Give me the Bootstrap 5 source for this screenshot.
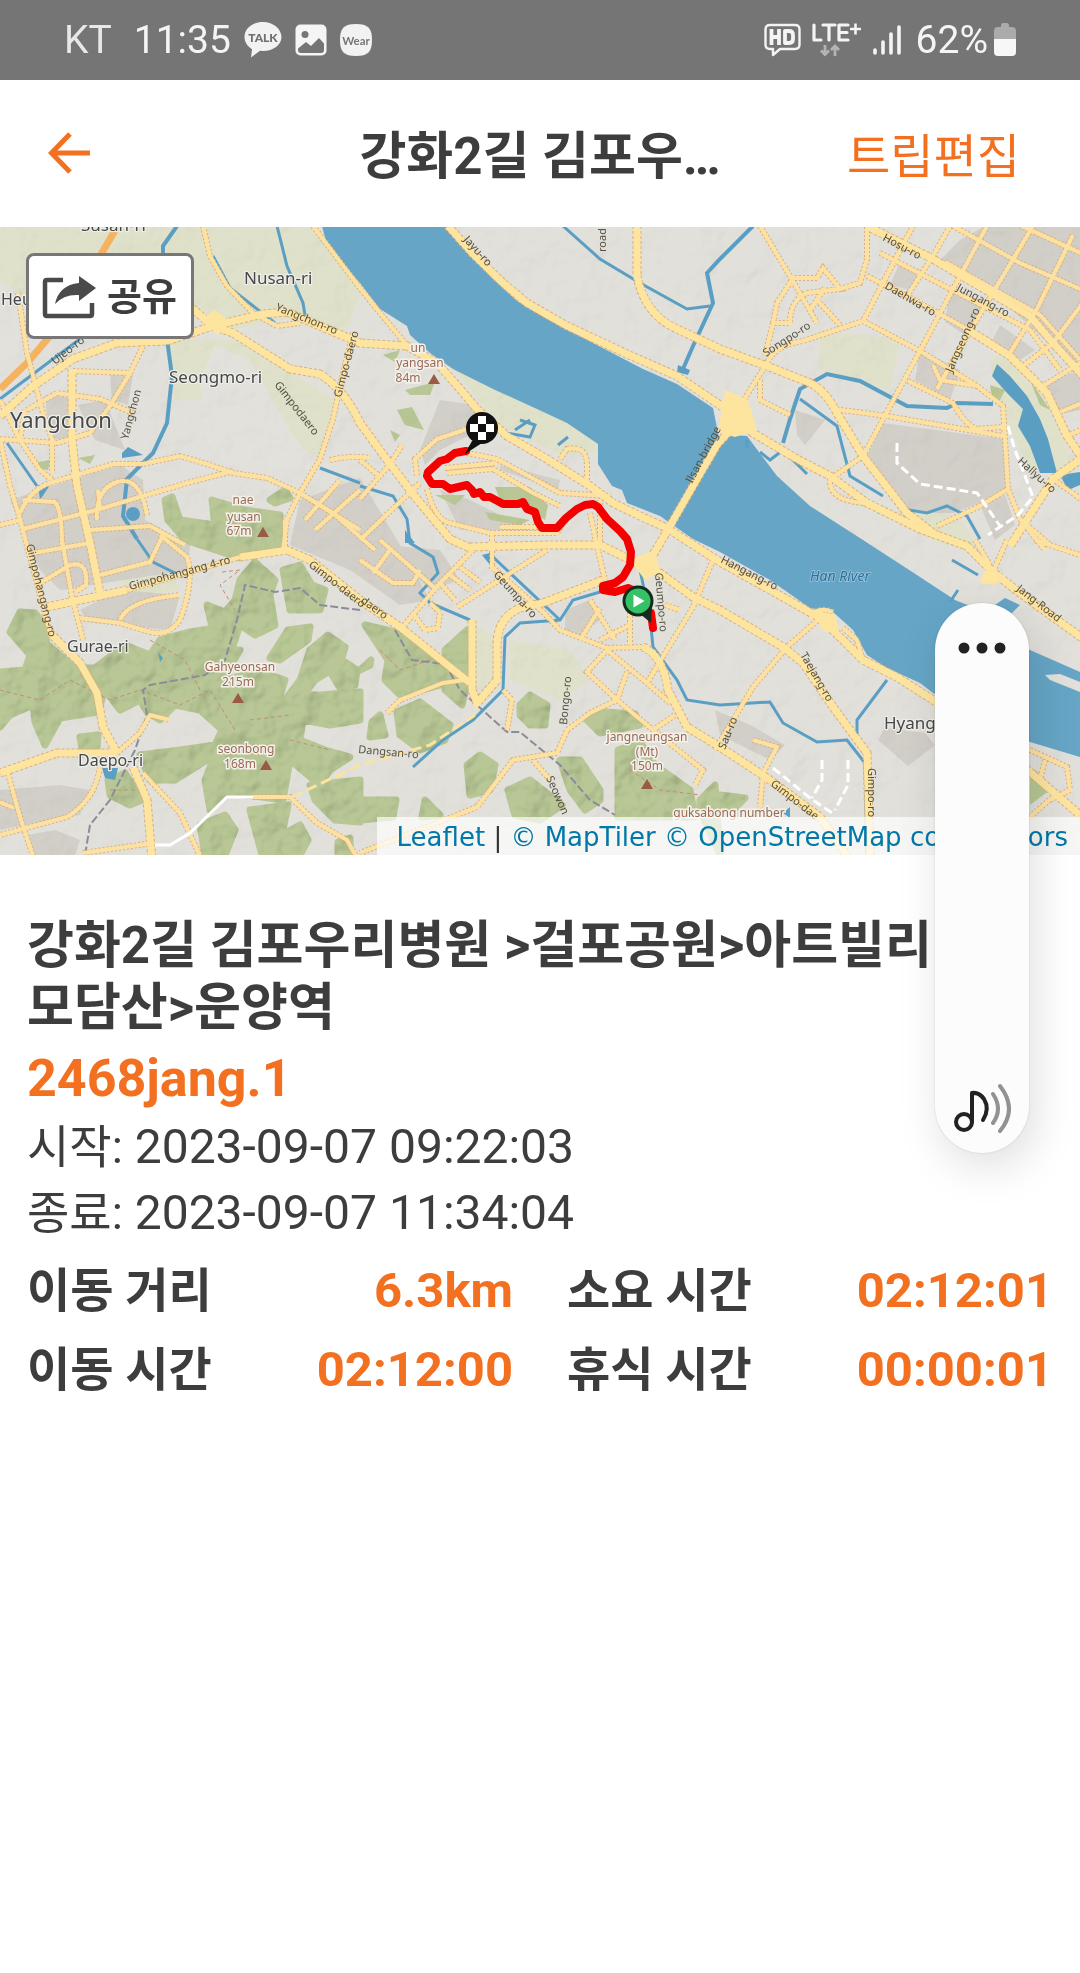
<!DOCTYPE html>
<html lang="ko">
<head>
<meta charset="utf-8">
<meta name="viewport" content="width=device-width, initial-scale=1">
<title>강화2길 김포우리병원</title>
<link href="https://cdn.jsdelivr.net/npm/bootstrap@5.3.0/dist/css/bootstrap.min.css" rel="stylesheet">
<style>
  :root { --trip-orange: #f37021; --trip-ink: #3d3d3d; }
  body { font-family: Roboto, "Noto Sans CJK KR", sans-serif; color: var(--trip-ink); background: #fff; min-height: 100vh; }
  .status-strip { background: #757575; height: 80px; padding: 0 64px; color: #f4f4f4; font-size: 39px; line-height: 46px; }
  .status-strip svg { display: block; flex: none; }
  .carrier { color: #e8e8e8; margin-right: 22px; }
  .strip-left { gap: 13px; }
  .strip-right { gap: 11px; }
  .battery-group { gap: 6px; }
  .top-nav { height: 147px; padding: 6px 48px 0; }
  .top-nav h1 { font-size: 51px; line-height: 62px; font-weight: 700; }
  .nav-side { flex: 1 0 0; }
  .edit-link { color: var(--trip-orange); font-size: 47px; line-height: 62px; margin-right: 12px; }
  .map-box svg.map-art { display: block; width: 100%; height: auto; }
  .share-btn { top: 26px; left: 26px; height: 86px; padding: 2px 14px 0 13px; gap: 11px; background: #fff; border: 3px solid #777; border-radius: 8px; font-size: 38px; line-height: 48px; font-weight: 700; color: var(--trip-ink); }
  .attrib { right: 0; bottom: 0; padding: 2px 12px 0 20px; height: 38px; line-height: 36px; background: rgba(255,255,255,.7); font-family: "DejaVu Sans", sans-serif; font-size: 26px; color: #333; }
  .attrib a { color: #0078a8; text-decoration: none; }
  .details { padding: 60px 27px 0; }
  .details h2 { font-size: 51px; line-height: 62px; font-weight: 700; }
  .user-link { display: block; color: var(--trip-orange); font-size: 52px; line-height: 71px; padding-top: 4px; font-weight: 700; text-decoration: none; }
  .when { font-size: 48px; line-height: 65px; }
  .when-label { font-size: 46px; }
  .stats { margin-top: 5px; column-gap: 54px; display: grid; grid-template-columns: 1fr 1fr; font-size: 49px; line-height: 79px; font-weight: 700; }
  .stats dt { font-weight: 700; font-size: 47px; }
  .stats dd { color: var(--trip-orange); }
  .volume-panel { right: 51px; top: 376px; width: 94px; height: 550px; border-radius: 47px; background: #fcfcfc; box-shadow: 0 0 2px rgba(0,0,0,.15), 6px 14px 44px rgba(0,0,0,.13); padding: 26px 0 17px; z-index: 3; }
  .panel-btn { border: 0; background: none; padding: 0; }
  .panel-btn svg { display: block; }
</style>
</head>
<body>
<div class="status-strip d-flex align-items-center justify-content-between">
  <div class="strip-left d-flex align-items-center">
    <span><span class="carrier">KT</span>11:35</span>
    <svg width="38" height="38" viewBox="0 0 38 38" aria-label="Talk"><path fill="#f2f2f2" d="M19 1C8.500 1 .5 7.500.5 16c0 5 3 9.500 7.500 12.200L7 36.500l9-6.700 3 .2c10.500 0 18.500-6.300 18.500-14S29.500 1 19 1z"/><text x="19" y="20.500" text-anchor="middle" font-family="Lato, sans-serif" font-weight="900" font-size="12" fill="#6f6f6f">TALK</text></svg>
    <svg width="32" height="32" viewBox="0 0 32 32" aria-label="Gallery"><rect x=".5" y=".5" width="31" height="31" rx="5" fill="#f5f5f5"/><circle cx="10" cy="10.500" r="3.500" fill="#757575"/><path fill="#757575" d="M3 24.500 11 18l5 4 8-8 5 5.500V26q0 3-3 3H6q-3 0-3-3z"/></svg>
    <svg width="32" height="32" viewBox="0 0 32 32" aria-label="Wear"><path fill="#f2f2f2" d="M16 0c12 0 16 4 16 16s-4 16-16 16S0 28 0 16 4 0 16 0z"/><text x="16" y="20.500" text-anchor="middle" font-family="Lato, sans-serif" font-weight="700" font-size="11.500" fill="#777">Wear</text></svg>
  </div>
  <div class="strip-right d-flex align-items-center">
    <svg width="37" height="34" viewBox="0 0 37 34" aria-label="HD"><path fill="none" stroke="#f4f4f4" stroke-width="2.400" stroke-linejoin="round" d="M6 2h25q4.500 0 4.500 4.500v15q0 4.500-4.500 4.500H16l-7 6v-6H6q-4.500 0-4.500-4.500v-15Q1.500 2 6 2z"/><path fill="none" stroke="#f4f4f4" stroke-width="3.800" stroke-linejoin="round" d="M7.500 6v16M15 6v16M7.500 14H15M21 8h4q4 0 4 4v4q0 4-4 4h-4z"/></svg>
    <svg width="50" height="36" viewBox="0 0 50 36" aria-label="LTE+"><path fill="none" stroke="#f4f4f4" stroke-width="3.200" stroke-linecap="round" stroke-linejoin="round" d="M2 3v15h7M11 3h12M17 3v15M36 3h-9v15h9M27 10.500h8"/><path fill="none" stroke="#f4f4f4" stroke-width="2.600" d="M38 7h11M43.500 1.500v11"/><path fill="none" stroke="#b4b4b4" stroke-width="2.800" d="M13 23v10M9 28.500l4 4 4-4M23 34V24M19 28l4-4 4 4"/></svg>
    <svg width="28" height="32" viewBox="0 0 28 32" aria-label="Signal"><path stroke="#f4f4f4" stroke-width="3.600" stroke-linecap="round" d="M2 26v3M10 18v11M18 10v19M26 3v26"/></svg>
    <span class="battery-group d-flex align-items-center ms-1"><span>62%</span>
    <svg width="22" height="34" viewBox="0 0 22 34" aria-label="Battery"><path fill="#ababab" d="M7 3q0-3 2-3h4q2 0 2 3v1h3q4 0 4 4v9H0V8q0-4 4-4h3z"/><path fill="#f7f7f7" d="M0 16h22v13q0 4-4 4H4q-4 0-4-4z"/></svg></span>
  </div>
</div>

<header class="top-nav d-flex align-items-center bg-white">
  <div class="nav-side"><a href="#" class="d-inline-block" aria-label="뒤로"><svg class="d-block" width="42" height="42" viewBox="0 0 42 42"><path fill="none" stroke="#f37021" stroke-width="5" d="M22 2 3.500 21 22 40M3 21h39"/></svg></a></div>
  <h1 class="mb-0 text-nowrap">강화2길 김포우…</h1>
  <div class="nav-side text-end text-nowrap"><a href="#" class="edit-link text-decoration-none">트립편집</a></div>
</header>

<main class="position-relative">
  <section class="map-box position-relative overflow-hidden" aria-label="지도">
    <svg class="map-art" viewBox="0 227 1080 628">
      <defs>
        <g id="big" fill="none">
          <path d="M188 305 213 326 233 333 290 369 320 374Q345 390 360 423L390 464 417 499 450 539 470 548"/>
          <path d="M0 416 33 386 73 359 117 343 167 341 213 326 263 314 287 312 327 329 360 343 407 346 437 363 460 389 477 409 507 436 547 459 590 486 613 503 640 516 667 528 720 562 797 605 820 618 843 640 863 660 897 677 933 700 1030 772 1080 815"/>
          <path d="M448 226 473 254 503 283 527 303 567 326 627 354 677 376 720 405 753 433 797 459 830 476 867 503 920 529 967 546 993 572 1020 593 1053 617 1085 640"/>
          <path d="M735 425 717 445 693 486 670 526 650 560"/>
          <path d="M637 226V276Q645 315 677 329L720 349 767 366 810 383Q825 390 837 413L863 456 907 513 937 536"/>
          <path d="M470 547 547 545 600 545 637 563 660 573 693 597 720 610 783 647 803 663 833 707 867 753 870 860"/>
          <path d="M603 580 543 603 520 608Q497 618 497 645V680L477 703 472 690V620M643 647Q663 655 668 690L687 727 720 747 770 780 820 817 850 860"/>
          <path d="M867 226 933 259 1030 316 1053 343 1085 378"/>
          <path d="M72 369V439L77 486 90 543 100 593M50 633 80 663 97 693 103 727 117 753M47 607 127 590M240 557 287 550 310 560 360 600 400 627 470 683"/>
          <path d="M0 773 57 753 117 753M133 767 147 800 152 860M1085 456 1053 479 1010 546M967 329 1010 356 1047 393 1067 436 1085 462"/>
        </g>
        <g id="mid" fill="none">
          <path d="M313 226 360 288 380 313 410 349M203 226 210 256 227 286 253 313 277 326 300 323M353 333 340 386 333 419 320 459 300 493 287 519 283 550"/>
          <path d="M18 293 27 353 43 413 52 439V473M73 371 130 373M143 346 130 373 110 406 90 433 57 443 0 439M27 410 57 393 100 399 133 413"/>
          <path d="M20 513Q30 490 50 483L113 464 143 464 180 456 207 464 233 473 267 478 300 493 333 513 375 550M23 529 100 509 143 496 187 483 233 471"/>
          <path d="M0 439 10 486 20 519 27 546 37 583 50 633M25 410 20 440 40 470 52 480M0 400 20 440M62 540 72 597 83 640M97 520Q95 490 117 482 140 475 147 515M100 509 98 490M23 500 55 502Q62 510 62 545M0 525 20 520"/>
          <path d="M117 753 140 733 150 715 170 720M143 773 180 813 200 856M100 767Q95 800 67 817L0 835M7 770 20 817 33 856M0 802 14 808M83 853 153 843M160 535 187 557Q195 580 180 620 168 637 150 632L120 623 80 618M120 620Q128 600 180 595M33 553 90 543M100 575 150 562 163 535M90 530 150 526 185 545"/>
          <path d="M127 590 190 572 240 557M253 797 290 797 317 823 347 840 356 856M285 520V548M300 493 360 530M305 520 340 480M315 530 360 490M330 460Q350 455 370 458M40 583 70 565Q88 560 86 585L75 592"/>
          <path d="M467 429 437 439 415 459 417 476M467 453 497 459 560 493 610 496M447 473 493 469 533 493 560 506M560 459 567 449Q587 445 587 465V486M427 489Q435 520 450 523L490 533 557 533 562 525M590 513 597 546 605 580M445 468 497 463M600 545 600 500"/>
          <path d="M360 540 420 483M360 499 390 464 402 445M360 460 378 475M360 560 393 583 413 583 420 570M390 550 373 573M380 540 437 590M473 550 440 583 400 630M547 550 457 607M492 567 543 612 560 630 607 648 643 647M713 560 693 607 647 683M492 535V570M500 527H545"/>
          <path d="M440 583 455 600M450 575 470 590M460 567 480 582M412 612 425 630 438 628 440 612M430 603 440 612"/>
          <path d="M607 650 587 672 617 700 653 730 703 770 695 785M607 650 647 683 670 703M617 700 590 713 567 730 557 753 513 760 477 807 360 853M507 730 512 700 503 690M533 760 550 780M387 713 400 700 443 683 465 680M617 700 627 672M653 730 675 715"/>
          <path d="M820 618 787 647 753 687 715 750M753 740 777 747 763 773 760 807M1030 750 1067 767 1070 790 1050 800M1030 817 1055 795M1045 760 1040 780M590 600 615 640M580 640 600 608M630 600V645M600 640 630 625M665 605 680 610"/>
          <path d="M843 628 857 640 863 660M833 612Q815 605 810 620M1035 540 1080 555M1007 540 993 572M975 540 990 565"/>
          <path d="M760 226 790 276 817 323M773 323 777 303 793 278 817 278 823 268 840 289 807 293Q790 300 790 323H773L765 355M840 289 860 283 867 259V226M740 406 767 363Q775 345 803 341L863 321 897 256 913 226M863 321 920 351 977 386 1003 406 1008 489 1020 519 1045 550M863 456 920 351 953 289 987 226M867 276 907 296 967 329M817 300 840 325M825 288 810 310"/>
          <path d="M1033 226 997 286 967 336 937 389M1073 235 1037 309 1010 353M1085 300 1053 343 1023 366M1085 360 1043 386M953 226 1020 263 1085 291M1013 222 1085 255M907 296 933 256 950 226M833 409 887 416 1003 436M863 456 830 479Q828 500 863 503M937 526 980 506 1008 489M1053 479 1085 502M908 381 953 403Q965 425 977 429L1003 427M760 380V400L790 415M933 365 940 380 977 386M1020 519 1050 545M1060 412 1085 402M1067 436 1085 428"/>
          <path d="M880 253 1030 330 1060 370M945 262 1040 315 1080 360"/>
        </g>
        <g id="peak"><path d="M-6 5 0-5 6 5z" fill="#9a5b45"/></g>
        <filter id="relief" x="0" y="0" width="100%" height="100%"><feTurbulence type="fractalNoise" baseFrequency=".035" numOctaves="3" seed="8"/><feDiffuseLighting surfaceScale="7" lighting-color="#fff" diffuseConstant="1.100"><feDistantLight azimuth="225" elevation="60"/></feDiffuseLighting><feComposite operator="in" in2="SourceGraphic"/></filter>
      </defs>
      <path fill="#e2e0db" d="M0 227h1080v628H0z"/>
      <path fill="#dfe1ca" d="M0 227H310L362 290 345 333 290 318 230 330 200 310 60 320 0 280zM168 340 235 340 300 378 335 400 322 460 270 430 225 400 175 400zM445 360 590 430 600 450 560 455 500 425zM110 555 165 562 180 590 130 600zM475 625 500 640 500 690 475 690zM510 640 570 650 590 680 560 700 510 680zM820 330 900 340 890 390 820 370zM990 360 1010 350 1060 430 1075 470 1030 470 1000 410zM890 510 960 515 975 545 940 545z"/>
      <g fill="#e3e1dc"><path d="M215 345 250 360 290 430 320 470 230 465 205 440 200 380zM0 340 60 320 20 380 0 390z"/></g>
      <g fill="#d2cec8">
        <path d="M45 395 72 398V438L50 440zM110 375 133 375 128 405 112 400zM78 405 105 400 125 450 95 440zM10 500 70 480 120 465 143 480 145 520 190 545 188 570 60 590 40 570zM80 610 120 590 180 595 170 630 90 622zM0 790 60 785 90 790 80 815 25 825 0 830zM28 835 55 830 80 840 75 855H35z"/>
        <path d="M300 500 360 478 400 545 430 600 400 605 350 570 290 545zM440 400 475 405 480 430 440 450 425 465 420 450zM500 465 560 480 558 490 500 470zM440 490 470 500 530 530 460 530zM385 545 440 550 460 580 430 590zM565 610 590 600 600 620 580 635 565 630zM715 710 750 725 785 745 770 760 720 735zM878 740 885 728 925 733 935 745 908 766z"/>
        <path d="M883 423 1003 439 1007 489 980 503 953 513 920 513 900 506 867 456zM795 410 825 420 805 445 797 435zM900 262 920 270 910 290 890 285zM950 290 985 306 965 335 945 322zM985 226 1080 226V375L1045 340 990 290 940 260 960 240zM1000 325 1035 350 1020 360 990 345zM1040 385 1080 370V410L1055 415zM920 350 960 370 950 400 915 380zM980 505 1005 495 1015 525 995 540z"/>
      </g>
      <g id="forest" fill="#b8c795" stroke="#b8c795" stroke-width="7" stroke-linejoin="round">
        <path d="M10 632 20 612 35 613 45 625 47 650 38 660 40 640 48 645 75 668H95L125 645 150 655 160 640 190 632 215 628 217 650 240 650 222 680 260 672 285 680 275 712 295 695 320 695 360 692V720L330 725 303 720 300 740 325 750 350 757 330 770 320 785 290 760 283 800 225 792 210 810 205 780 215 755 175 780 150 780 140 755 180 750 215 745 222 730 200 710 175 705 160 720 147 712 140 700 120 710 105 690 98 712 60 718 45 745 35 722 33 705 10 715 0 727V672L25 670 30 655z"/>
        <path d="M165 500 172 497 180 520 215 525 212 500 245 510 280 515 282 545 240 558 185 540 168 520zM270 500 285 490 290 498 275 503z"/>
        <path d="M207 605 225 612 235 600 240 580 255 562 275 580 270 595 275 625 255 635 240 625 228 660 215 670 215 640zM283 570 300 565 312 585 325 590 320 610 290 610zM288 630 310 627 308 640 280 660 270 658zM310 650 328 635 345 647 340 665 315 680 300 700 285 700 300 680zM345 662 357 670 355 685 340 688 332 675zM80 737 98 735 97 748H82z"/>
        <path d="M108 780 125 773 142 800 130 805 110 795zM200 825 225 815 235 830 225 855H205zM250 810 288 805 282 835 300 825 308 840 300 855H262zM310 785 360 780V822L335 820 315 800zM338 842 350 838 350 855H338z"/>
        <path d="M365 625 395 632 420 650 438 665 440 685 400 695 385 680 388 660zM445 650 467 630 468 680 462 705 445 690zM397 712 420 702 450 725 445 740 420 750 400 735zM360 670 371 660 370 665zM372 722 380 715 385 735 370 737zM467 765 480 755 495 765 490 790 470 795zM508 790 530 780 562 805 540 820 515 815zM560 760 580 760 600 790 600 800 585 810 570 790zM520 705 530 695 547 705 545 725 530 725 520 715zM587 720 605 712 635 714 640 725 600 733zM618 750 640 742 655 765 690 790 695 817 618 817zM700 800 715 785 720 855 700 810zM360 800 396 800 393 817 360 820zM425 800 440 815 422 817zM720 795 745 798 735 808 720 808z"/>
      </g>
      <path fill="#b8c795" d="M383 355 400 350 395 362zM405 390 435 382 430 395 410 395zM397 410 412 407 424 430 405 425zM390 430 400 435 395 442zM495 487 530 487 548 505 545 520 530 510 500 500zM485 512 530 520 520 525 490 520zM435 495 465 495 455 505zM990 385 1005 390 1000 400 992 397zM1030 380 1050 410 1040 405zM38 462 50 460 48 470 38 468zM78 458 95 455 90 464zM1036 770 1050 790 1030 805V775z"/>
      <use href="#forest" filter="url(#relief)" style="mix-blend-mode:multiply" opacity=".35"/>
      <path filter="url(#relief)" style="mix-blend-mode:multiply" opacity=".08" d="M0 227h1080v628H0z"/>
      <g fill="none" stroke="#c18d74" stroke-width="1" stroke-dasharray="4 3"><path d="M0 690 40 700 70 680 110 700 140 690 180 705 210 690 235 730M150 640 185 660 200 690M222 572 240 570 220 585 235 610M250 720 290 715M380 650 400 670 430 660M110 790 140 790M290 740 330 750M630 770 660 790 700 795"/></g>
      <g fill="none" stroke="#8b8c99" stroke-width="2" stroke-dasharray="8 3"><path d="M360 610 320 605 300 588 275 592 245 585 237 620 225 660 205 675 150 685 143 690 147 715 135 750 110 800 90 825 85 855M395 630 412 660 445 664 460 690 507 732 520 732 560 765 590 800 615 815"/></g>
      <path fill="#66a5c6" d="M322 226 328 249 360 283 380 309 407 326 410 335 430 353 453 369 493 389 537 409 567 423 598 444V464L612 486 622 490 627 503 660 516 693 539 720 552 770 580 810 608 833 612 853 630 867 655 887 668 920 683 933 693 1030 742 1080 757V672L1030 650 1000 625 1020 605 1005 598 985 612 955 600 920 577 863 540 810 506 777 476 747 436 730 435 720 443 713 408 677 384 643 369 593 343 547 319 517 301 493 279 473 258 453 236 448 226z"/>
      <path fill="#e2e0db" d="M1045 675 1060 674 1080 682V692L1050 680z"/>
      <g fill="none" stroke="#5a9fc3" stroke-width="3">
        <path stroke-width="4" d="M753 226 720 259 707 273 713 303 693 346 683 369M177 226 163 246V253M167 339 172 376 167 423 153 453 127 479 123 516 137 539M783 443 790 419 800 389 827 374 860 381 907 406 947 408 957 403 993 404"/>
        <path d="M563 226 600 259 640 283 687 309 710 306M800 399 837 426 850 476 883 496M903 509 927 513 947 506 967 516 980 539M277 226 287 266 303 303 305 315M80 339 53 359 0 399M137 539 153 562 183 577M7 443 37 486M360 486 393 496 407 519 410 543 433 557 438 573 420 593 430 603 470 620"/>
        <path d="M493 557 560 620M600 592 573 600 560 620 520 623 505 637 503 690 473 720 443 740 413 767M640 570 650 617 653 647 677 680 687 700 720 705 770 702 783 723 817 742 847 740 865 763 867 853M887 680 857 720V735M470 400 480 410 500 432 530 437 535 425 520 420M515 430 530 420M558 445 568 437M747 440V448M760 452 770 460 783 450 807 474M952 560 978 575M950 602 958 590M320 468 360 483M213 256 230 288 275 323"/>
      </g>
      <g fill="#5a9fc3"><path d="M997 364 1010 376 1027 396 1040 419 1048 439 1057 473 1040 473 1030 446 1018 426 1023 409 1007 393 992 376zM1060 475 1080 472V485L1068 490zM678 365 690 370 688 375 677 372zM122 453 128 447 143 455 122 458zM38 485 50 485 40 500zM405 530 415 543H405zM482 555 490 553V565zM102 768 118 768 115 780 105 778zM158 652 163 658 160 662zM783 813 790 807V818z"/><circle cx="133" cy="514" r="7"/></g>
      <g fill="none" stroke="#f5b25f" stroke-width="7"><path d="M0 389 27 363 55 330M117 227 100 256"/></g>
      <use href="#mid" stroke="#dfae73" stroke-width="6" stroke-dasharray="2 2"/>
      <use href="#big" stroke="#dfae73" stroke-width="9" stroke-dasharray="3 2"/>
      <use href="#mid" stroke="#fce1a0" stroke-width="4"/>
      <use href="#big" stroke="#fde5a0" stroke-width="7"/>
      <path fill="#fde5a0" d="M725 390 748 400 757 430 735 437 718 432zM200 320 215 310 230 322 218 335zM813 610 835 615 840 635 822 630zM630 560 655 550 660 572 645 580zM985 570 1005 575 995 585 980 583z"/>
      <g fill="none" stroke="#fff" stroke-width="3"><path d="M155 845H170L190 833 227 797H253"/><path stroke-dasharray="9 4" d="M897 443V463L920 484 977 493 1000 526M1008 426 1015 450 1033 497 1018 515 988 535M773 768 810 798 835 815M822 760V780L812 798M848 760V785L835 810"/></g>
      <path fill="none" stroke="#fae49f" stroke-width="3" stroke-dasharray="11 5" d="M292 797 360 765 430 745 475 715"/>

      <g font-family="Noto Sans, sans-serif" fill="#484848" stroke="#eeeeea" stroke-width="2.500" stroke-linejoin="round" paint-order="stroke">
        <text x="81" y="231" font-size="17">Susan-ri</text>
        <text x="10" y="428" font-size="22">Yangchon</text>
        <text x="244" y="284" font-size="17">Nusan-ri</text>
        <text x="169" y="383" font-size="17">Seongmo-ri</text>
        <text x="67" y="652" font-size="16">Gurae-ri</text>
        <text x="78" y="766" font-size="16">Daepo-ri</text>
        <text x="884" y="729" font-size="17">Hyangsan</text>
        <text x="1" y="305" font-size="16">Heu</text>
      </g>
      <text x="810" y="581" font-family="Noto Sans, sans-serif" font-style="italic" font-size="14" fill="#2f6f96" stroke="#9cc6dc" stroke-width="1.500" paint-order="stroke">Han River</text>
      <g font-family="Noto Sans, sans-serif" font-size="12" fill="#9a6a58" stroke="#f3f1ea" stroke-width="3" paint-order="stroke" text-anchor="middle">
        <text x="240" y="671">Gahyeonsan</text><text x="238" y="686">215m</text>
        <text x="246" y="753">seonbong</text><text x="240" y="768">168m</text>
        <text x="244" y="521">yusan</text><text x="239" y="535">67m</text><text x="243" y="504">nae</text>
        <text x="418" y="352">un</text><text x="420" y="367">yangsan</text><text x="408" y="382">84m</text>
        <text x="647" y="741">jangneungsan</text><text x="647" y="756">(Mt)</text><text x="647" y="770">150m</text>
        <text x="729" y="817">guksabong number</text>
      </g>
      <use href="#peak" x="238" y="698"/><use href="#peak" x="266" y="765"/><use href="#peak" x="263" y="532"/><use href="#peak" x="434" y="379"/><use href="#peak" x="647" y="784"/>
      <g font-family="Noto Sans, sans-serif" font-size="11" fill="#55503f">
        <text transform="translate(463 240) rotate(48)">Jayu-ro</text><text transform="translate(275 310) rotate(22)">Yangchon-ro</text>
        <text transform="translate(274 385) rotate(52)">Gimpodaero</text><text transform="translate(341 398) rotate(-75)">Gimpo-daero</text>
        <text transform="translate(26 545) rotate(76)">Gimpohangang-ro</text><text transform="translate(130 590) rotate(-15)">Gimpohangang 4-ro</text>
        <text transform="translate(308 566) rotate(38)">Gimpo-daero</text><text transform="translate(493 575) rotate(48)">Geumpa-ro</text>
        <text transform="translate(360 602) rotate(36)">daero</text><text transform="translate(655 573) rotate(85)">Geumpo-ro</text>
        <text transform="translate(720 562) rotate(27)">Hangang-ro</text><text transform="translate(800 655) rotate(60)">Taejang-ro</text>
        <text transform="translate(692 484) rotate(-62)">Ilsan-bridge</text><text transform="translate(766 357) rotate(-33)">Songpo-ro</text>
        <text transform="translate(882 240) rotate(28)">Hosu-ro</text><text transform="translate(884 288) rotate(30)">Daehwa-ro</text>
        <text transform="translate(956 290) rotate(28)">Jungang-ro</text><text transform="translate(952 373) rotate(-66)">Jangseong-ro</text>
        <text transform="translate(1017 462) rotate(42)">Hallyu-ro</text><text transform="translate(1016 590) rotate(38)">Jang-Road</text>
        <text transform="translate(868 768) rotate(90)">Gimpo-ro</text><text transform="translate(770 785) rotate(38)">Gimpo-dae</text>
        <text transform="translate(567 725) rotate(-85)">Bongo-ro</text><text transform="translate(546 778) rotate(66)">Seowon</text>
        <text transform="translate(358 753) rotate(5)">Dangsan-ro</text>
        <text transform="translate(128 440) rotate(-75)">Yangchon</text><text transform="translate(606 252) rotate(-90)">road</text>
        <text transform="translate(725 750) rotate(-68)">Sau-ro</text><text transform="translate(55 365) rotate(-38)">Ujeo-ro</text>
      </g>

      <path fill="none" stroke="#7d2030" stroke-width="3" d="M467 451 475 442"/>
      <path fill="none" stroke="#f50000" stroke-width="8" stroke-linejoin="round" stroke-linecap="round" d="M466 451 455 453 447 459 440 461 428 472 427 476 432 484 443 484 450 489 467 485 472 490 474 494 480 492 484 497 490 497 503 504 518 504 523 502 527 509 535 512 538 522 542 528H557L566 518 577 509 585 505 593 504 598 507 607 519 620 531 627 539 631 552 630 565 623 577 615 583 603 586V590L615 592 628 588 637 592M651 613 653 628"/>
      <path fill="#111" d="m472 441-7 13 20-13z"/><circle cx="482" cy="428" r="16" fill="#111"/>
      <path fill="#fff" d="M478 416h8v8h-8zM470 424h8v8h-8zM486 424h8v8h-8zM478 432h8v8h-8z"/>
      <path fill="#1c2b20" d="m639 613 12 10 1-17z"/><circle cx="638" cy="601" r="14" fill="#35c166" stroke="#142b1c" stroke-width="3"/><path fill="#fff" d="M633.500 594.500v13l11-6.500z"/>
    </svg>
    <button type="button" class="share-btn position-absolute d-flex align-items-center">
      <svg width="54" height="44" viewBox="0 0 54 44" aria-hidden="true"><path fill="none" stroke="#4a4a4a" stroke-width="4.500" stroke-linejoin="round" d="M21 5H5q-2 0-2 2v32q0 2 2 2h43q2 0 2-2V28"/><path fill="#4a4a4a" d="M37 1 54 13 37 26V20Q22 19 13 29 17 10 37 8z"/></svg>
      <span>공유</span>
    </button>
    <div class="attrib position-absolute text-nowrap"><a href="#">Leaflet</a> | <a href="#">© MapTiler</a> <a href="#">© OpenStreetMap contributors</a></div>
  </section>

  <section class="details">
    <h2 class="mb-0 text-nowrap">강화2길 김포우리병원 &gt;걸포공원&gt;아트빌리<br>모담산&gt;운양역</h2>
    <a href="#" class="user-link">2468jang.1</a>
    <div class="when"><span class="when-label">시작:</span> 2023-09-07 09:22:03</div>
    <div class="when"><span class="when-label">종료:</span> 2023-09-07 11:34:04</div>
    <div class="stats">
      <dl class="d-flex justify-content-between mb-0"><dt>이동 거리</dt><dd class="mb-0">6.3km</dd></dl>
      <dl class="d-flex justify-content-between mb-0"><dt>소요 시간</dt><dd class="mb-0">02:12:01</dd></dl>
      <dl class="d-flex justify-content-between mb-0"><dt>이동 시간</dt><dd class="mb-0">02:12:00</dd></dl>
      <dl class="d-flex justify-content-between mb-0"><dt>휴식 시간</dt><dd class="mb-0">00:00:01</dd></dl>
    </div>
  </section>

  <aside class="volume-panel position-absolute d-flex flex-column align-items-center justify-content-between" aria-label="음량">
    <button type="button" class="panel-btn" aria-label="더보기"><svg width="50" height="38" viewBox="0 0 50 38"><g fill="#222"><circle cx="7" cy="19" r="5.500"/><circle cx="25" cy="19" r="5.500"/><circle cx="43" cy="19" r="5.500"/></g></svg></button>
    <button type="button" class="panel-btn" aria-label="미디어 음량"><svg width="58" height="54" viewBox="0 0 58 54"><g fill="none" stroke-linecap="round" stroke-linejoin="round"><g stroke="#222" stroke-width="4"><circle cx="11" cy="40" r="8"/><path d="M19 40V11Q26 10 31 17 37 27 30 38"/></g><g stroke="#929292" stroke-width="4"><path d="M40 12Q50 27 40 41M47 4Q65 27 47 49"/></g></g></svg></button>
  </aside>
</main>
<script src="https://cdn.jsdelivr.net/npm/bootstrap@5.3.0/dist/js/bootstrap.bundle.min.js"></script>
</body>
</html>
